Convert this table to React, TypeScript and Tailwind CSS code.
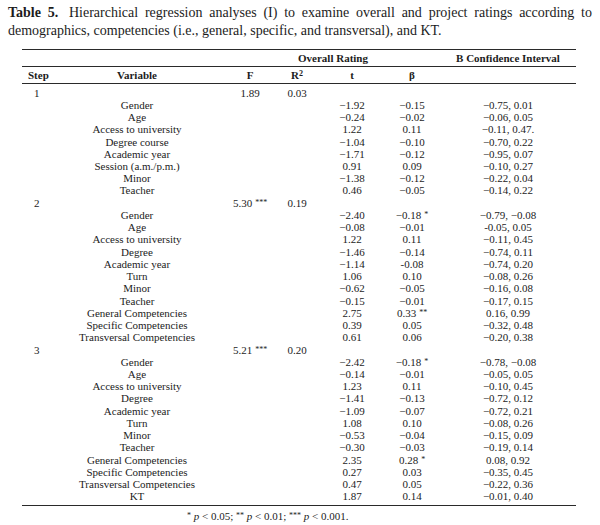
import React from "react";

type Row =
  | { kind: "step"; step: string; f: string; fStar?: string; r2: string }
  | { kind: "var"; name: string; t: string; b: string; bStar?: string; ci: string };

const rows: Row[] = [
  { kind: "step", step: "1", f: "1.89", r2: "0.03" },
  { kind: "var", name: "Gender", t: "−1.92", b: "−0.15", ci: "−0.75, 0.01" },
  { kind: "var", name: "Age", t: "−0.24", b: "−0.02", ci: "−0.06, 0.05" },
  { kind: "var", name: "Access to university", t: "1.22", b: "0.11", ci: "−0.11, 0.47." },
  { kind: "var", name: "Degree course", t: "−1.04", b: "−0.10", ci: "−0.70, 0.22" },
  { kind: "var", name: "Academic year", t: "−1.71", b: "−0.12", ci: "−0.95, 0.07" },
  { kind: "var", name: "Session (a.m./p.m.)", t: "0.91", b: "0.09", ci: "−0.10, 0.27" },
  { kind: "var", name: "Minor", t: "−1.38", b: "−0.12", ci: "−0.22, 0.04" },
  { kind: "var", name: "Teacher", t: "0.46", b: "−0.05", ci: "−0.14, 0.22" },
  { kind: "step", step: "2", f: "5.30", fStar: "***", r2: "0.19" },
  { kind: "var", name: "Gender", t: "−2.40", b: "−0.18", bStar: "*", ci: "−0.79, −0.08" },
  { kind: "var", name: "Age", t: "−0.08", b: "−0.01", ci: "-0.05, 0.05" },
  { kind: "var", name: "Access to university", t: "1.22", b: "0.11", ci: "−0.11, 0.45" },
  { kind: "var", name: "Degree", t: "−1.46", b: "−0.14", ci: "−0.74, 0.11" },
  { kind: "var", name: "Academic year", t: "−1.14", b: "-0.08", ci: "−0.74, 0.20" },
  { kind: "var", name: "Turn", t: "1.06", b: "0.10", ci: "−0.08, 0.26" },
  { kind: "var", name: "Minor", t: "−0.62", b: "−0.05", ci: "−0.16, 0.08" },
  { kind: "var", name: "Teacher", t: "−0.15", b: "−0.01", ci: "−0.17, 0.15" },
  { kind: "var", name: "General Competencies", t: "2.75", b: "0.33", bStar: "**", ci: "0.16, 0.99" },
  { kind: "var", name: "Specific Competencies", t: "0.39", b: "0.05", ci: "−0.32, 0.48" },
  { kind: "var", name: "Transversal Competencies", t: "0.61", b: "0.06", ci: "−0.20, 0.38" },
  { kind: "step", step: "3", f: "5.21", fStar: "***", r2: "0.20" },
  { kind: "var", name: "Gender", t: "−2.42", b: "−0.18", bStar: "*", ci: "−0.78, −0.08" },
  { kind: "var", name: "Age", t: "−0.14", b: "−0.01", ci: "−0.05, 0.05" },
  { kind: "var", name: "Access to university", t: "1.23", b: "0.11", ci: "−0.10, 0.45" },
  { kind: "var", name: "Degree", t: "−1.41", b: "−0.13", ci: "−0.72, 0.12" },
  { kind: "var", name: "Academic year", t: "−1.09", b: "−0.07", ci: "−0.72, 0.21" },
  { kind: "var", name: "Turn", t: "1.08", b: "0.10", ci: "−0.08, 0.26" },
  { kind: "var", name: "Minor", t: "−0.53", b: "−0.04", ci: "−0.15, 0.09" },
  { kind: "var", name: "Teacher", t: "−0.30", b: "−0.03", ci: "−0.19, 0.14" },
  { kind: "var", name: "General Competencies", t: "2.35", b: "0.28", bStar: "*", ci: "0.08, 0.92" },
  { kind: "var", name: "Specific Competencies", t: "0.27", b: "0.03", ci: "−0.35, 0.45" },
  { kind: "var", name: "Transversal Competencies", t: "0.47", b: "0.05", ci: "−0.22, 0.36" },
  { kind: "var", name: "KT", t: "1.87", b: "0.14", ci: "−0.01, 0.40" },
];

const grid = "grid grid-cols-[48px_134px_22px_48px_46px_64px_56px_136px]";

function Star({ s }: { s?: string }) {
  if (!s) return null;
  return <span className="ml-[3px] relative -top-[2px] text-[8px]">{s}</span>;
}

export default function App() {
  return (
    <div
      className="w-[600px] h-[525px] bg-white text-[#1c1c1c] overflow-hidden"
      style={{ fontFamily: '"Liberation Serif", "Times New Roman", serif' }}
    >
      <p className="px-[8px] pt-[4px] text-[14px] leading-[18px] text-justify w-[600px]">
        <span className="font-bold mr-[4px]">Table 5.</span> Hierarchical regression analyses (I) to examine overall
        and project ratings according to demographics, competencies (i.e., general, specific, and transversal), and
        KT.
      </p>

      <div className="ml-[22px] w-[554px] mt-[9px] text-[11px]">
        <div className="border-t border-[#2a2a2a]" />
        <div className={`${grid} h-[16px] items-center font-bold`}>
          <div />
          <div />
          <div />
          <div className="col-span-4 text-center">Overall Rating</div>
          <div className="text-center">B Confidence Interval</div>
        </div>
        <div className="border-t border-[#2a2a2a]" />
        <div className={`${grid} h-[16px] items-center font-bold`}>
          <div className="pl-[6px]">Step</div>
          <div className="text-center">Variable</div>
          <div />
          <div className="text-center">F</div>
          <div className="text-center">
            R<span className="text-[8px] relative -top-[3px]">2</span>
          </div>
          <div className="text-center">t</div>
          <div className="text-center">β</div>
          <div />
        </div>
        <div className="border-t border-[#2a2a2a]" />
        <div className="pt-[3px] pb-[2px]">
          {rows.map((r, i) =>
            r.kind === "step" ? (
              <div key={i} className={`${grid} h-[12.24px] items-center leading-none`}>
                <div className="pl-[12px]">{r.step}</div>
                <div />
                <div />
                <div className="text-center whitespace-nowrap">
                  {r.f}
                  <Star s={r.fStar} />
                </div>
                <div className="text-center">{r.r2}</div>
                <div />
                <div />
                <div />
              </div>
            ) : (
              <div key={i} className={`${grid} h-[12.24px] items-center leading-none`}>
                <div />
                <div className="text-center whitespace-nowrap">{r.name}</div>
                <div />
                <div />
                <div />
                <div className="text-center">{r.t}</div>
                <div className="text-center whitespace-nowrap">
                  {r.b}
                  <Star s={r.bStar} />
                </div>
                <div className="text-center whitespace-nowrap">{r.ci}</div>
              </div>
            )
          )}
        </div>
        <div className="border-t border-[#2a2a2a]" />
      </div>
      <div className="mt-[3px] pl-[187px] text-[11px] leading-[14px]">
        <span className="text-[8px] relative -top-[2px]">*</span> <i>p</i> &lt; 0.05;{" "}
        <span className="text-[8px] relative -top-[2px]">**</span> <i>p</i> &lt; 0.01;{" "}
        <span className="text-[8px] relative -top-[2px]">***</span> <i>p</i> &lt; 0.001.
      </div>
    </div>
  );
}
